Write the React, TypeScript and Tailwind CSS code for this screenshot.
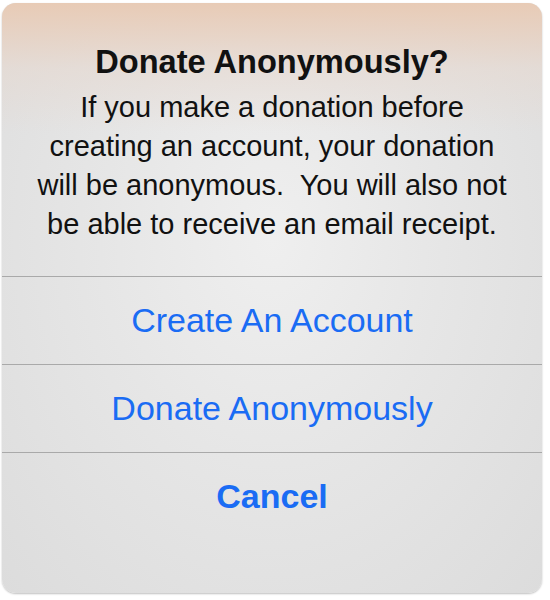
import React from 'react';

const lines = [
  'If you make a donation before',
  'creating an account, your donation',
  'will be anonymous.\u00a0 You will also not',
  'be able to receive an email receipt.',
];

export default function App() {
  return (
    <div className="w-[550px] h-[600px] bg-white pt-[3px] pl-[2px]" style={{ fontFamily: '"Liberation Sans", Arial, sans-serif' }}>
      <div className="relative w-[540px] h-[590px] rounded-[14px] overflow-hidden flex flex-col bg-[radial-gradient(ellipse_at_50%_40%,#efefef_0%,#e6e6e6_45%,#dcdcdc_100%)] shadow-[0_1px_2px_rgba(0,0,0,0.25)]">
        <div className="absolute inset-x-0 top-0 h-[130px] bg-gradient-to-b from-[#e8cbb6] via-[#e6d8cf]/60 to-transparent pointer-events-none" />
        <div className="relative pt-[40px] pb-[32px] px-[10px] text-center text-[#111]">
          <h1 className="text-[32.6px] leading-[38px] font-bold">Donate Anonymously?</h1>
          <p className="mt-[7px] text-[29px] leading-[39px]">
            {lines.map((l) => (
              <span key={l} className="block whitespace-nowrap">{l}</span>
            ))}
          </p>
        </div>
        <button className="relative h-[88px] border-t border-[#a9a9a9] text-[34px] text-[#1a6cf4] flex items-center justify-center">
          Create An Account
        </button>
        <button className="relative h-[88px] border-t border-[#a9a9a9] text-[34px] text-[#1a6cf4] flex items-center justify-center">
          Donate Anonymously
        </button>
        <button className="relative h-[88px] border-t border-[#a9a9a9] text-[34px] font-bold text-[#1a6cf4] flex items-center justify-center">
          Cancel
        </button>
      </div>
    </div>
  );
}
